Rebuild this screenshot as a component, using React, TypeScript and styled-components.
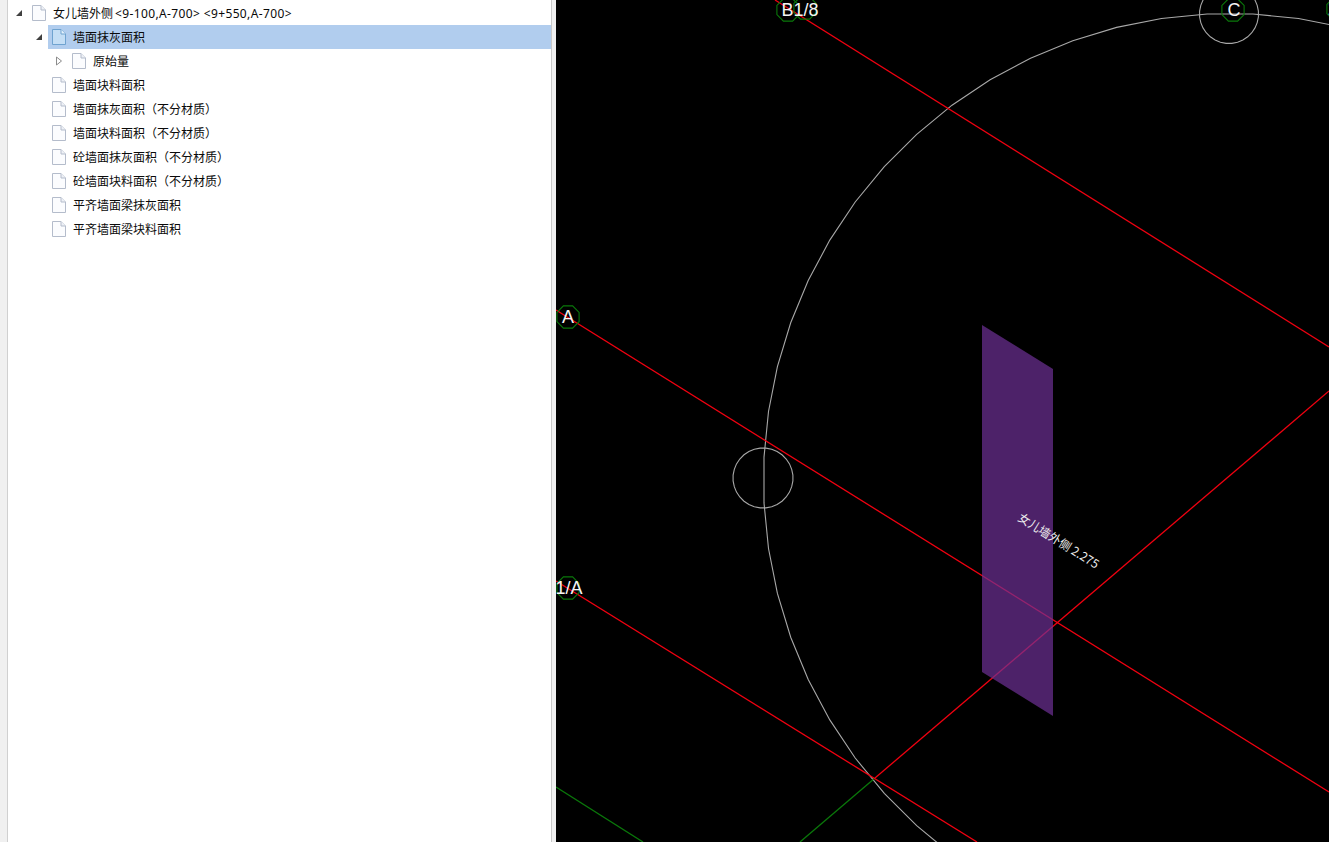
import React from 'react';
import styled, { createGlobalStyle } from 'styled-components';

const GlobalStyle = createGlobalStyle`
  html, body {
    margin: 0;
    padding: 0;
    height: 100%;
    overflow: hidden;
    background: #f0f0f0;
  }
  #root {
    height: 100%;
  }
`;

const Page = styled.div`
  display: flex;
  width: 1329px;
  height: 842px;
  background: #f0f0f0;
`;

const TreePanel = styled.div`
  width: 544px;
  margin-left: 7px;
  padding-top: 1px;
  background: #ffffff;
  border-left: 1px solid #d0d0d0;
  box-sizing: border-box;
  font-family: 'Noto Sans', 'Noto Sans CJK SC', sans-serif;
  font-size: 12px;
  color: #0a0a0a;
`;

const Splitter = styled.div`
  width: 5px;
  background: #f0f0f0;
  border-left: 1px solid #c8c8c8;
  box-sizing: border-box;
`;

const Row = styled.div<{ $depth: number }>`
  display: flex;
  align-items: center;
  height: 24px;
  padding-left: ${props => props.$depth * 20 + 4}px;
`;

const Expander = styled.span`
  display: flex;
  align-items: center;
  justify-content: center;
  width: 12px;
  height: 12px;
  margin-left: 1px;
`;

const Label = styled.div<{ $selected?: boolean }>`
  display: flex;
  align-items: center;
  flex: 1;
  height: 24px;
  margin-left: 3px;
  padding-left: 4px;
  background: ${props => (props.$selected ? '#b1cdee' : 'transparent')};
`;

const Caption = styled.span`
  margin-left: 7px;
  padding-top: 2px;
  white-space: nowrap;
  line-height: 24px;
`;

const Coordinates = styled.span`
  margin-left: 2px;
  letter-spacing: 0.37px;
`;

const Canvas = styled.div`
  flex: 1;
  height: 842px;
  background: #000000;
`;

const CanvasSvg = styled.svg`
  display: block;
`;

const GridLabel = styled.text`
  font-family: 'Liberation Sans', sans-serif;
  font-size: 18px;
  fill: #f4f4f4;
  text-anchor: middle;
`;

const WallLabel = styled.text`
  font-family: 'Noto Sans CJK SC', 'Noto Sans', sans-serif;
  font-size: 12px;
  fill: #eeeeee;
`;

const FileIcon: React.FC<{ selected?: boolean }> = ({ selected }) => (
  <svg width="14" height="16" viewBox="0 0 14 16">
    <path
      d="M0.5 0.5H9L13.5 5V15.5H0.5Z"
      fill={selected ? '#c4def5' : '#fbfcfe'}
      stroke={selected ? '#6fa3d0' : '#b4bccb'}
    />
    <path d="M9 0.5V5H13.5" fill={selected ? '#e4f1fb' : '#eef1f6'} stroke={selected ? '#6fa3d0' : '#b4bccb'} />
  </svg>
);

const OpenArrow = () => (
  <svg width="8" height="8" viewBox="0 0 8 8">
    <path d="M7 1V7H1Z" fill="#404040" />
  </svg>
);

const ClosedArrow = () => (
  <svg width="8" height="10" viewBox="0 0 8 10">
    <path d="M1.5 1V9L6.5 5Z" fill="#ffffff" stroke="#8c8c8c" />
  </svg>
);

interface TreeItem {
  text: string;
  coords?: string;
  depth: number;
  arrow?: 'open' | 'closed';
  selected?: boolean;
}

const items: TreeItem[] = [
  { text: '女儿墙外侧', coords: '<9-100,A-700> <9+550,A-700>', depth: 0, arrow: 'open' },
  { text: '墙面抹灰面积', depth: 1, arrow: 'open', selected: true },
  { text: '原始量', depth: 2, arrow: 'closed' },
  { text: '墙面块料面积', depth: 1 },
  { text: '墙面抹灰面积（不分材质）', depth: 1 },
  { text: '墙面块料面积（不分材质）', depth: 1 },
  { text: '砼墙面抹灰面积（不分材质）', depth: 1 },
  { text: '砼墙面块料面积（不分材质）', depth: 1 },
  { text: '平齐墙面梁抹灰面积', depth: 1 },
  { text: '平齐墙面梁块料面积', depth: 1 },
];

// regular polygon with a flat top, the CAD view draws its circles like this
const polygon = (cx: number, cy: number, r: number, sides: number) =>
  Array.from({ length: sides }, (_, i) => {
    const a = (Math.PI / sides) * (2 * i + 1);
    return `${(cx + r * Math.cos(a)).toFixed(1)},${(cy + r * Math.sin(a)).toFixed(1)}`;
  }).join(' ');

const RED = '#f00010';
const GREEN = '#0a780a';
const GREY = '#a8a8a8';
const LINE = 1.3;

const axisBubbles: [number, number][] = [
  [568, 317],
  [568, 588],
  [788, 10],
  [805, 8],
  [1233, 10],
  [1338, 9],
];

const Drawing = () => (
  <CanvasSvg width="773" height="842" viewBox="556 0 773 842">
    <polygon points={polygon(1230, 480, 466.6, 64)} fill="none" stroke={GREY} strokeWidth={1.1} />
    <polygon points={polygon(763, 478, 30, 32)} fill="none" stroke={GREY} strokeWidth={1.1} />
    <polygon points={polygon(1229, 14, 29.5, 32)} fill="none" stroke={GREY} strokeWidth={1.1} />

    <line x1="556" y1="787" x2="643" y2="842" stroke={GREEN} strokeWidth={LINE} />
    <line x1="875" y1="778" x2="800" y2="842" stroke={GREEN} strokeWidth={LINE} />

    <line x1="775" y1="0" x2="1329" y2="347" stroke={RED} strokeWidth={LINE} />
    <line x1="556" y1="310" x2="1329" y2="792" stroke={RED} strokeWidth={LINE} />
    <line x1="556" y1="581" x2="977" y2="842" stroke={RED} strokeWidth={LINE} />
    <line x1="875" y1="778" x2="1329" y2="391" stroke={RED} strokeWidth={LINE} />

    <polygon points="982,325 1053,369 1053,716 982,672" fill="#6e3195" fillOpacity="0.7" />

    {axisBubbles.map(([x, y]) => (
      <polygon key={x + '-' + y} points={polygon(x, y, 12, 8)} fill="none" stroke={GREEN} strokeWidth={1.1} />
    ))}

    <GridLabel x="568" y="323">A</GridLabel>
    <GridLabel x="569" y="594">1/A</GridLabel>
    <GridLabel x="800" y="16">B1/8</GridLabel>
    <GridLabel x="1234" y="16">C</GridLabel>
    <GridLabel x="1333" y="15">2</GridLabel>

    <WallLabel transform="translate(1017 520) rotate(32)">女儿墙外侧 2.275</WallLabel>
  </CanvasSvg>
);

export default function App() {
  return (
    <Page>
      <GlobalStyle />
      <TreePanel>
        {items.map(item => (
          <Row key={item.text} $depth={item.depth}>
            <Expander>
              {item.arrow === 'open' && <OpenArrow />}
              {item.arrow === 'closed' && <ClosedArrow />}
            </Expander>
            <Label $selected={item.selected}>
              <FileIcon selected={item.selected} />
              <Caption>
                {item.text}
                {item.coords && <Coordinates>{item.coords}</Coordinates>}
              </Caption>
            </Label>
          </Row>
        ))}
      </TreePanel>
      <Splitter />
      <Canvas>
        <Drawing />
      </Canvas>
    </Page>
  );
}
